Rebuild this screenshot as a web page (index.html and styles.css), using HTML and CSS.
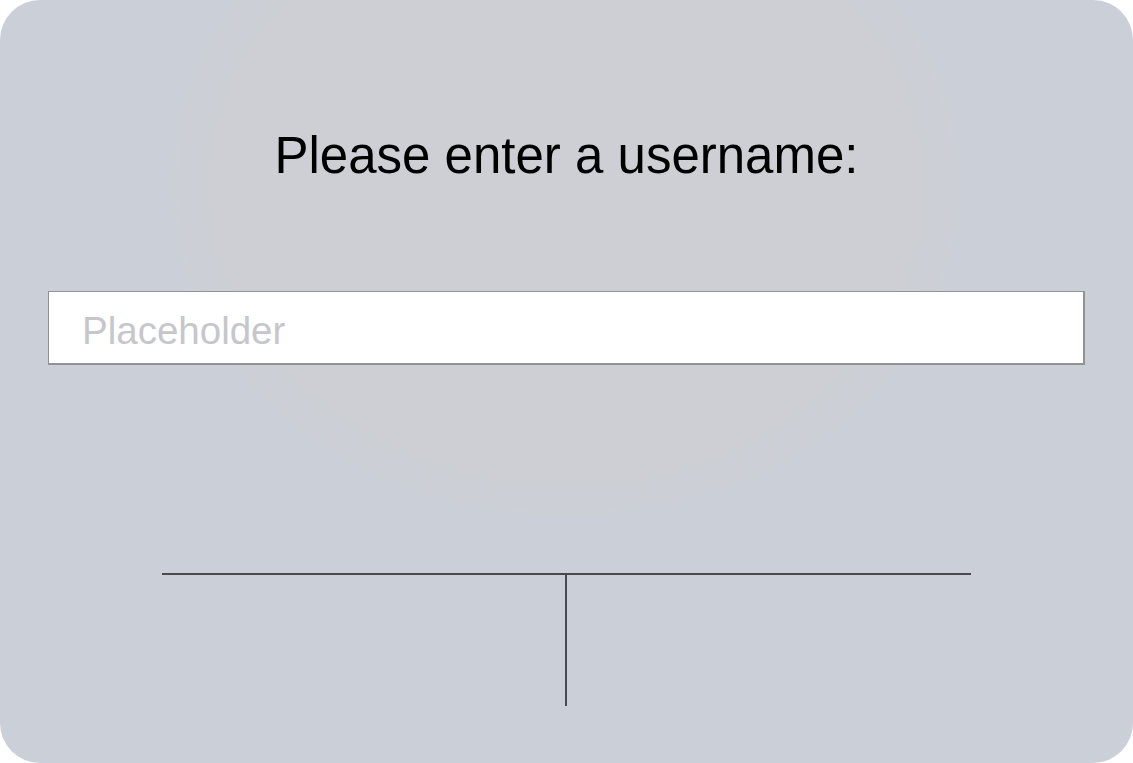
FILE: index.html
```html
<!DOCTYPE html>
<html>
<head>
<meta charset="utf-8">
<link rel="stylesheet" href="styles.css">
</head>
<body>
<div class="dialog">
  <h1 class="title">Please enter a username:</h1>
  <input class="field" type="text" placeholder="Placeholder">
  <div class="buttons">
    <div class="btn"></div>
    <div class="btn btn-right"></div>
  </div>
</div>
</body>
</html>
```
FILE: styles.css
```css
html, body {
  margin: 0;
  padding: 0;
  background: #ffffff;
}
.dialog {
  width: 1133px;
  height: 763px;
  box-sizing: border-box;
  border-radius: 40px;
  background-color: #cbcfd8;
  background-image: radial-gradient(ellipse 405px 340px at 566px 185px, #cdcfd4 0%, #cdcfd4 85%, #ccd0d6 95%, rgba(203,207,216,0) 100%);
  display: flex;
  flex-direction: column;
  align-items: center;
  font-family: "Liberation Sans", Arial, sans-serif;
  overflow: hidden;
}
.title {
  margin: 123px 0 0 0;
  font-weight: normal;
  font-size: 51px;
  line-height: 66px;
  color: #000;
}
.field {
  margin-top: 102px;
  width: 1037px;
  height: 74px;
  box-sizing: border-box;
  border: 1px solid #929292;
  border-bottom-width: 2px;
  border-right-width: 2px;
  background: #fff;
  padding: 7px 0 0 33px;
  font-family: "Liberation Sans", Arial, sans-serif;
  font-size: 38.5px;
  outline: none;
}
.field::placeholder {
  color: #c6c6cb;
}
.buttons {
  margin-top: 208px;
  width: 809px;
  height: 131px;
  display: flex;
  border-top: 2px solid #4a4a4e;
}
.btn {
  flex: 1;
}
.btn-right {
  margin-left: -1px;
  border-left: 2px solid #4a4a4e;
}
```
